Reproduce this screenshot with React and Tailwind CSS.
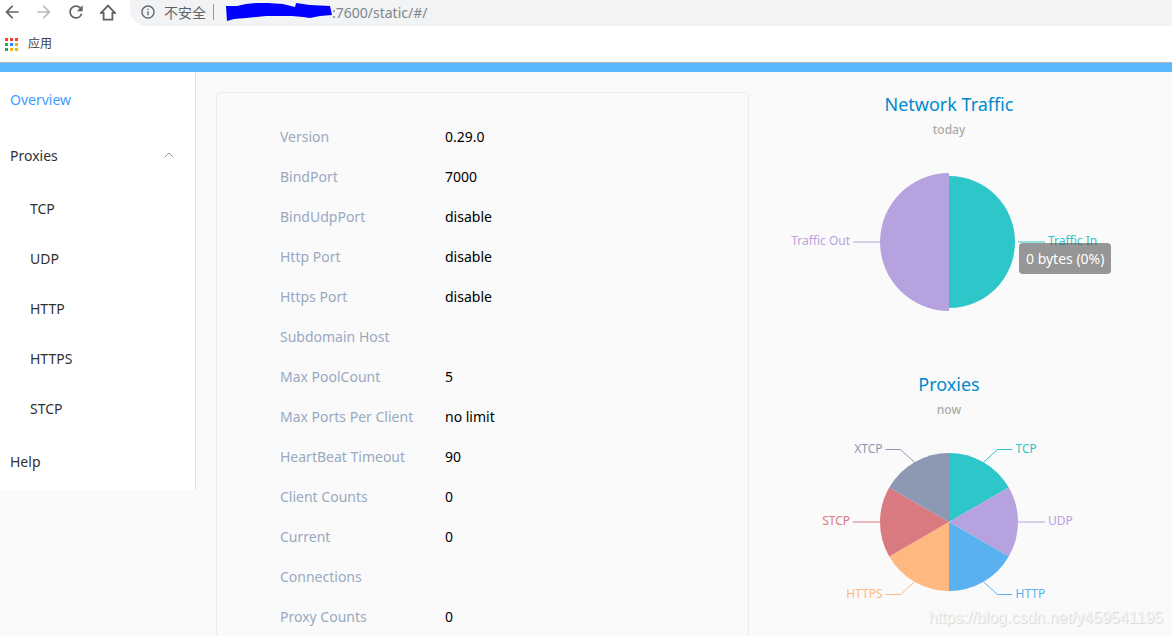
import { useState } from "react";
import { ChevronUp } from "lucide-react";
import { MdArrowBack, MdArrowForward, MdRefresh, MdInfoOutline } from "react-icons/md";

const appColors = [
  "bg-[#ff3b30]",
  "bg-[#ff3b30]",
  "bg-[#ff3b30]",
  "bg-[#34a853]",
  "bg-[#1a8cff]",
  "bg-[#f4a90b]",
  "bg-[#34a060]",
  "bg-[#f9b10b]",
  "bg-[#f9b10b]",
];

const proxyTypes = ["TCP", "UDP", "HTTP", "HTTPS", "STCP"];

const serverInfo = [
  { label: "Version", value: "0.29.0" },
  { label: "BindPort", value: "7000" },
  { label: "BindUdpPort", value: "disable" },
  { label: "Http Port", value: "disable" },
  { label: "Https Port", value: "disable" },
  { label: "Subdomain Host", value: "" },
  { label: "Max PoolCount", value: "5" },
  { label: "Max Ports Per Client", value: "no limit" },
  { label: "HeartBeat Timeout", value: "90" },
  { label: "Client Counts", value: "0" },
  { label: "Current Connections", value: "0" },
  { label: "Proxy Counts", value: "0" },
];

// angles are in degrees, clockwise from the top
const traffic = [
  { name: "Traffic In", color: "#2ec7c9", from: 0, to: 180, r: 66 },
  { name: "Traffic Out", color: "#b6a2de", from: 180, to: 360, r: 69 },
];

const proxies = [
  { name: "TCP", color: "#2ec7c9", from: 0, to: 60, r: 69 },
  { name: "UDP", color: "#b6a2de", from: 60, to: 120, r: 69 },
  { name: "HTTP", color: "#5ab1ef", from: 120, to: 180, r: 69 },
  { name: "HTTPS", color: "#ffb980", from: 180, to: 240, r: 69 },
  { name: "STCP", color: "#d87a80", from: 240, to: 300, r: 69 },
  { name: "XTCP", color: "#8d98b3", from: 300, to: 360, r: 69 },
];

const CX = 200;
const CY = 150;

function point(angle, r) {
  const rad = (angle * Math.PI) / 180;
  return [CX + r * Math.sin(rad), CY - r * Math.cos(rad)];
}

function Slice({ name, color, from, to, r }) {
  const [x1, y1] = point(from, r);
  const [x2, y2] = point(to, r);
  const mid = (from + to) / 2;
  const side = mid < 180 ? 1 : -1;
  const [lx, ly] = point(mid, 69);
  const flat = mid % 180 === 90;
  const ey = flat ? CY : Math.floor(ly + (ly < CY ? -13 : 13)) + 0.5;
  const ex = lx + side * 14;
  const end = flat ? CX + side * 96 : ex + side * 15;

  return (
    <g>
      <path d={`M${CX} ${CY}L${x1} ${y1}A${r} ${r} 0 0 1 ${x2} ${y2}Z`} fill={color} />
      <polyline
        points={`${lx},${ly} ${ex},${ey} ${end},${ey}`}
        fill="none"
        stroke={color}
      />
      <text
        x={end + side * 3}
        y={Math.ceil(ey) + 3}
        fill={color}
        textAnchor={side > 0 ? "start" : "end"}
        className="text-[12px]"
      >
        {name}
      </text>
    </g>
  );
}

function PieChart({ title, subtitle, data, children }) {
  return (
    <section className="relative flex h-[280px] justify-center">
      <svg width="400" height="280" viewBox="0 0 400 280" className="shrink-0">
        <text x={CX} y="19" textAnchor="middle" fill="#008acd" className="text-[18px]">
          {title}
        </text>
        <text x={CX} y="42" textAnchor="middle" fill="#aaaaaa" className="text-[12px] font-medium">
          {subtitle}
        </text>
        {data.map((d) => (
          <Slice key={d.name} {...d} />
        ))}
      </svg>
      {children}
    </section>
  );
}

function HomeIcon() {
  return (
    <svg width="20" height="20" viewBox="0 0 20 20" fill="none" stroke="currentColor" strokeWidth="1.8">
      <path d="M2.6 11.4L10 3.6L17.4 11.4" />
      <path d="M2.2 10.9H5.6V17.6H14.4V10.9H17.8" />
    </svg>
  );
}

function BrowserBar() {
  const [url, setUrl] = useState(":7600/static/#/");

  return (
    <header className="border-b border-[#b6b4b6] bg-white">
      <div className="flex h-[26px] overflow-hidden text-[#5f6368]">
        <div className="flex w-[130px] shrink-0 items-center gap-3 pb-[2px] pl-[2px]">
          <button aria-label="Back"><MdArrowBack size={20} /></button>
          <button aria-label="Forward" className="text-[#b9bbbd]"><MdArrowForward size={20} /></button>
          <button aria-label="Reload"><MdRefresh size={20} /></button>
          <button aria-label="Home"><HomeIcon /></button>
        </div>
        <div className="flex flex-1 items-center rounded-bl-2xl bg-[#f1f3f4] pb-[2px] pl-[10px] text-[14px]">
          <MdInfoOutline size={16} />
          <span className="ml-2 w-[42px] whitespace-nowrap">不安全</span>
          <span className="ml-[7px] h-4 w-px bg-[#9a9da0]" />
          <svg width="106" height="24" viewBox="0 0 106 24" className="ml-3 shrink-0">
            <path
              d="M0 6L11 6L20 4L31 3L42 3L57 4L69 7L70 3L77 4L84 5L104 6L106 15L94 16L84 18L77 17L66 16L52 16L40 16L20 18L8 19L1 21Z"
              fill="#0000fe"
            />
          </svg>
          <input
            type="text"
            aria-label="Address"
            value={url}
            onChange={(e) => setUrl(e.target.value)}
            className="min-w-0 flex-1 bg-transparent text-[#80868b] outline-none"
          />
        </div>
      </div>
      <div className="flex h-9 items-center pl-[5px]">
        <button className="flex items-center gap-[10px] text-[12px] text-[#3c4043]">
          <span className="grid grid-cols-3 gap-[2px]">
            {appColors.map((c, i) => (
              <span key={i} className={`size-[3px] ${c}`} />
            ))}
          </span>
          应用
        </button>
      </div>
    </header>
  );
}

function Sidebar() {
  const [open, setOpen] = useState(true);

  return (
    <nav className="w-[196px] shrink-0 border-r border-[#e0e0e0] bg-white text-[14px] text-[#303133]">
      <a href="#/" className="flex h-14 items-center px-[10px] pb-[2px] text-[#409eff]">
        Overview
      </a>
      <button
        onClick={() => setOpen(!open)}
        className="flex h-14 w-full items-center justify-between pr-[18px] pb-[2px] pl-[10px]"
      >
        Proxies
        <ChevronUp size={16} strokeWidth={1.5} className="text-[#909399]" />
      </button>
      {open &&
        proxyTypes.map((p) => (
          <a key={p} href={`#/proxies/${p.toLowerCase()}`} className="flex h-[50px] items-center pb-[2px] pl-[30px]">
            {p}
          </a>
        ))}
      <a href="#/help" className="flex h-14 items-center px-[10px] pb-[2px]">
        Help
      </a>
    </nav>
  );
}

export default function App() {
  return (
    <div className="relative h-screen overflow-hidden bg-[#fafafa] font-['Noto_Sans','Noto_Sans_CJK_SC',sans-serif]">
      <BrowserBar />
      <div className="h-[9px] bg-[#58b7ff]" />
      <div className="flex items-start">
        <Sidebar />
        <main className="grid flex-1 grid-cols-[1fr_400px] pt-5 pr-[23px] pl-5">
          <dl className="rounded border border-[#eaeefb] px-[63px] py-6 text-[14px] leading-10">
            {serverInfo.map((row) => (
              <div key={row.label} className="flex">
                <dt className="w-[165px] shrink-0 pr-[30px] text-[#99a9bf]">{row.label}</dt>
                <dd className="text-black">{row.value}</dd>
              </div>
            ))}
          </dl>
          <div>
            <PieChart title="Network Traffic" subtitle="today" data={traffic}>
              <div className="absolute top-[151px] left-[270px] rounded bg-[#323232]/50 px-[7px] py-[5px] text-[14px] leading-[21px] whitespace-nowrap text-white">
                0 bytes (0%)
              </div>
            </PieChart>
            <PieChart title="Proxies" subtitle="now" data={proxies} />
          </div>
        </main>
      </div>
      <p className="absolute right-[9px] bottom-2 font-['Liberation_Sans',sans-serif] text-[16px] leading-5 text-[#f6f6f6] [text-shadow:1px_1px_1px_#d4d4d4]">
        https://blog.csdn.net/y459541195
      </p>
    </div>
  );
}
